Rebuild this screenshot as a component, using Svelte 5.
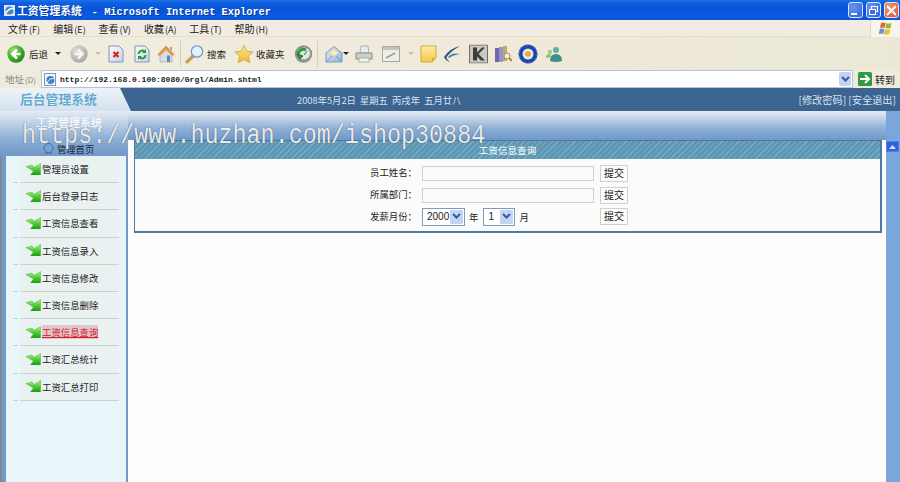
<script>
  const menus = [['文件','F'],['编辑','E'],['查看','V'],['收藏','A'],['工具','T'],['帮助','H']];
  const items = ['管理员设置','后台登录日志','工资信息查看','工资信息录入','工资信息修改','工资信息删除','工资信息查询','工资汇总统计','工资汇总打印'];
  const active = '工资信息查询';
</script>

<div class="win">
  <svg class="defs" width="0" height="0" aria-hidden="true">
    <defs>
      <radialGradient id="gGreen" cx=".35" cy=".3" r=".8"><stop offset="0" stop-color="#a5e27f"/><stop offset=".55" stop-color="#42ad2c"/><stop offset="1" stop-color="#1f7d1d"/></radialGradient>
      <radialGradient id="gGray" cx=".35" cy=".3" r=".8"><stop offset="0" stop-color="#dedcd4"/><stop offset="1" stop-color="#a5a49c"/></radialGradient>
      <linearGradient id="gPage" x1="0" y1="0" x2="1" y2="1"><stop offset="0" stop-color="#fafafa"/><stop offset="1" stop-color="#c5d4ee"/></linearGradient>
      <linearGradient id="gStar" x1="0" y1="0" x2="0" y2="1"><stop offset="0" stop-color="#fbeb90"/><stop offset="1" stop-color="#eeb92c"/></linearGradient>
      <linearGradient id="gNote" x1="0" y1="0" x2="0" y2="1"><stop offset="0" stop-color="#fdeea4"/><stop offset="1" stop-color="#f3c64a"/></linearGradient>
      <linearGradient id="gMail" x1="0" y1="0" x2="1" y2="1"><stop offset="0" stop-color="#e9f1fb"/><stop offset="1" stop-color="#8fb1dc"/></linearGradient>
      <linearGradient id="gArrow" x1="0" y1="0" x2="0" y2="1"><stop offset="0" stop-color="#b8f08e"/><stop offset=".5" stop-color="#4fcf34"/><stop offset="1" stop-color="#1f9a1c"/></linearGradient>
    </defs>
  </svg>

  <div class="titlebar">
    <svg class="appicon" width="13" height="13" viewBox="0 0 13 13"><rect x="1" y="1" width="11" height="11" fill="#dfe8f5"/><circle cx="6.5" cy="6.5" r="4" fill="#3f86c9"/><path d="M3 9q4-6 8-4" stroke="#fff" fill="none" stroke-width="1.5"/></svg>
    <span class="ttl">工资管理系统<span class="ttl-en">- Microsoft Internet Explorer</span></span>
    <div class="winbtns">
      <span class="wb"><i class="min"></i></span>
      <span class="wb"><svg width="11" height="11" viewBox="0 0 11 11" fill="none" stroke="#fff"><rect x="3.5" y="1.5" width="6" height="5"/><rect x="1.5" y="4.5" width="6" height="5" fill="#3a6ee0"/></svg></span>
      <span class="wb close"><svg width="11" height="11" viewBox="0 0 11 11" stroke="#fff" stroke-width="2"><path d="M1 1l9 9M10 1l-9 9"/></svg></span>
    </div>
  </div>

  <div class="menubar">
    {#each menus as m}<span class="mi">{m[0]}<small>({m[1]})</small></span>{/each}
    <span class="flagbox">
      <svg width="15" height="15" viewBox="0 0 15 15"><path d="M3 2q2-1 4.500 0L6.500 7q-2-1-4.500 0z" fill="#e8643c"/><path d="M8 2q2 1 5.500 0L12.500 7q-3 1-5-.2z" fill="#8cc03c"/><path d="M1.800 8q2-1 4.500 0l-1 5q-2-1-4.500 0z" fill="#5a94de"/><path d="M6.800 8q2 1 5.500 0l-1 5q-3 1-5.500 0z" fill="#f0c030"/></svg>
    </span>
  </div>

  <div class="toolbar">
    <svg class="ic" style="--l:7px" width="18" height="18" viewBox="0 0 18 18"><circle cx="9" cy="9" r="8.7" fill="url(#gGreen)"/><path d="M10 4.500L5.500 9l4.500 4.500M5.500 9h8" stroke="#fff" stroke-width="2.600" fill="none"/></svg>
    <span class="tx" style="--l:29px">后退</span>
    <i class="caret" style="--l:55px"></i>
    <svg class="ic" style="--l:70px" width="18" height="18" viewBox="0 0 18 18"><circle cx="9" cy="9" r="8.700" fill="url(#gGray)"/><path d="M8 4.500L12.500 9 8 13.500M12.500 9h-8" stroke="#f6f6f2" stroke-width="2.600" fill="none"/></svg>
    <i class="caret faint" style="--l:95px"></i>
    <svg class="ic" style="--l:108px" width="16" height="18" viewBox="0 0 16 18"><path d="M1 1h10l4 4v12H1z" fill="url(#gPage)" stroke="#8094b8"/><path d="M5.500 7l5 5M10.500 7l-5 5" stroke="#d9241c" stroke-width="2.200"/></svg>
    <svg class="ic" style="--l:134px" width="16" height="18" viewBox="0 0 16 18"><path d="M1 1h10l4 4v12H1z" fill="url(#gPage)" stroke="#8094b8"/><path d="M4.500 9a3.500 3.500 0 0 1 6-2.400M11.500 10a3.500 3.500 0 0 1-6 2.400" stroke="#2c9a34" stroke-width="1.900" fill="none"/><path d="M12 4v4H8zM4 15v-4h4z" fill="#2c9a34"/></svg>
    <svg class="ic" style="--l:157px" width="18" height="18" viewBox="0 0 18 18"><path d="M3 8l6-5 6 5v9H3z" fill="#d9dde0" stroke="#9aa0a8" stroke-width=".6"/><path d="M9 1L.8 9.500l2 1L9 4.500l6.200 6 2-1z" fill="#ec9a3e" stroke="#c77a24" stroke-width=".5"/><path d="M13 2h2v4l-2-2z" fill="#b0a090"/><rect x="10" y="10.500" width="3" height="6.500" fill="#5d87b8"/></svg>
    <i class="sep" style="--l:180px"></i>
    <svg class="ic" style="--l:185px" width="19" height="19" viewBox="0 0 19 19"><path d="M8 11.500l-6 6" stroke="#cf9a5c" stroke-width="3.200" stroke-linecap="round"/><circle cx="12" cy="7" r="5.700" fill="#e6f2fb" stroke="#6d9cc6" stroke-width="1.300"/></svg>
    <span class="tx" style="--l:207px">搜索</span>
    <svg class="ic" style="--l:234px" width="20" height="19" viewBox="0 0 20 19"><path d="M10 .8l2.800 6 6.400.7-4.800 4.300 1.400 6.400L10 15l-5.800 3.200 1.400-6.400L.8 7.500l6.400-.7z" fill="url(#gStar)" stroke="#c9a63a" stroke-width=".8"/></svg>
    <span class="tx" style="--l:256px">收藏夹</span>
    <svg class="ic" style="--l:294px" width="19" height="18" viewBox="0 0 19 18"><circle cx="9.500" cy="9" r="8.700" fill="#8a978f"/><circle cx="10" cy="8.500" r="6" fill="#dfe8e2"/><path d="M4 10a5.500 5.500 0 0 1 8-5" stroke="#2f9b3a" stroke-width="3" fill="none"/><path d="M3 9l3 5 3-3zM13 6l-3 4" fill="#2f9b3a" stroke="#2a6a3a"/></svg>
    <i class="sep" style="--l:317px"></i>
    <svg class="ic" style="--l:325px" width="18" height="18" viewBox="0 0 18 18"><path d="M1 8l8-6.500L17 8v9H1z" fill="url(#gMail)" stroke="#7a9cc8"/><path d="M4 8l5-4 5 4-5 3.500z" fill="#f5ecc8" stroke="#cdbb7a" stroke-width=".6"/><path d="M1 17l6-6M17 17l-6-6" stroke="#7a9cc8"/></svg>
    <i class="caret" style="--l:343px"></i>
    <svg class="ic" style="--l:355px" width="18" height="18" viewBox="0 0 18 18"><path d="M6 1h7l1 7H5z" fill="#e6ecf4" stroke="#9aa3ad" stroke-width=".8"/><path d="M1 8h16v6H1z" fill="#cfcfca" stroke="#8d8d87"/><path d="M4 13h10v4H4z" fill="#f4f4f4" stroke="#a0a09a" stroke-width=".8"/></svg>
    <svg class="ic" style="--l:382px" width="18" height="16" viewBox="0 0 18 16"><rect x=".5" y=".5" width="17" height="15" fill="#eeeee8" stroke="#a8a8a0"/><rect x="1" y="1" width="16" height="3" fill="#c4c4bd"/><path d="M4 12l9-5" stroke="#9c9c94" stroke-width="1.500"/></svg>
    <i class="caret faint" style="--l:408px"></i>
    <svg class="ic" style="--l:420px" width="17" height="18" viewBox="0 0 17 18"><path d="M1 1h15v12l-4 4H1z" fill="url(#gNote)" stroke="#d0aa3c"/><path d="M16 13h-4v4z" fill="#d8ac3c"/></svg>
    <svg class="ic" style="--l:443px" width="18" height="18" viewBox="0 0 18 18"><path d="M17 1Q7 3 1 12l2 1Q8 6 17 1z" fill="#2f5c86"/><path d="M17 9Q9 7 5 12l1 1q4-3 11-4z" fill="#4d7da3"/><path d="M1 12q2 4 6 5-3-2-4-5z" fill="#25496f"/></svg>
    <svg class="ic" style="--l:469px" width="19" height="19" viewBox="0 0 19 19"><rect x=".5" y=".5" width="18" height="18" fill="#c9c9c4" stroke="#6f6f68"/><path d="M4 3h4v5l5-5h3l-6.500 6.500L16 16h-4l-4-4v4H4z" fill="#3c3c3a"/></svg>
    <svg class="ic" style="--l:494px" width="18" height="18" viewBox="0 0 18 18"><rect x="1" y="3" width="4" height="14" fill="#6f68b0"/><rect x="5" y="2" width="4" height="15" fill="#9a92c8"/><rect x="9" y="1" width="4" height="15" fill="#b7ad6a"/><circle cx="13" cy="11" r="3" fill="#e9f0f4" stroke="#b8862c"/><path d="M15 13l3 3" stroke="#b8862c" stroke-width="2"/></svg>
    <svg class="ic" style="--l:518px" width="20" height="20" viewBox="0 0 20 20"><circle cx="10" cy="10" r="9.500" fill="#1f44a8"/><circle cx="10" cy="10" r="9" fill="none" stroke="#5f86d8" stroke-dasharray="2 2"/><circle cx="10" cy="10" r="5.500" fill="#dfe6f4"/><circle cx="10" cy="10" r="2.800" fill="#e9a92c"/></svg>
    <svg class="ic" style="--l:545px" width="18" height="18" viewBox="0 0 18 18"><circle cx="11" cy="5" r="3" fill="#5fb0a8"/><path d="M5 16q0-7 6-7t6 7q-6 2-12 0z" fill="#3f8f8a"/><circle cx="5" cy="7" r="2.200" fill="#9bcf88"/><path d="M1 13q0-4 4-4l1 3z" fill="#86bb76"/></svg>
  </div>

  <div class="addr">
    <span class="addr-label">地址<small>(D)</small></span>
    <div class="addr-box">
      <svg width="13" height="13" viewBox="0 0 13 13"><rect x=".5" y=".5" width="11" height="12" fill="#f3f6fb" stroke="#7d97bb"/><circle cx="6.500" cy="7" r="4" fill="#3b83c8"/><path d="M3 10q3-6 8-4" stroke="#fff" fill="none"/></svg>
      <span class="url">http://192.168.0.100:8080/Grgl/Admin.shtml</span>
      <span class="drop"><svg width="9" height="7" viewBox="0 0 9 7"><path d="M1 1l3.500 3.500L8 1" stroke="#3a5a98" stroke-width="2" fill="none"/></svg></span>
    </div>
    <span class="go"><svg width="14" height="14" viewBox="0 0 14 14"><rect width="14" height="14" rx="1.500" fill="#2f9a45"/><path d="M2 7h9M7 3l4 4-4 4" stroke="#fff" stroke-width="2" fill="none"/></svg>转到</span>
  </div>

  <header class="head">
    <div class="logo"><span>后台管理系统</span></div>
    <div class="date">2008年5月2日&nbsp; 星期五&nbsp; 丙戌年&nbsp; 五月廿八</div>
    <div class="links">[修改密码] [安全退出]</div>
  </header>

  <div class="content">
    <aside class="side">
      <div class="side-top">
        <div class="side-title">工资管理系统</div>
        <div class="side-home">
          <svg width="11" height="12" viewBox="0 0 11 12"><circle cx="5.500" cy="5" r="4.500" fill="#6fa4dc" stroke="#3f6fa8"/><path d="M2 10h7" stroke="#5a7a9e" stroke-width="2"/></svg>
          <span>管理首页</span>
        </div>
      </div>
      <nav class="side-list">
        {#each items as it}
          <div class="row" class:on={it === active}>
            <svg class="arrow" width="15" height="12" viewBox="0 0 15 12"><path d="M0 3.500L6 2l2 2.500L14.500.5V12H4.500L7.500 8z" fill="url(#gArrow)" stroke="#2aa524" stroke-width=".4"/></svg>
            <span class="lbl">{it}</span>
          </div>
        {/each}
      </nav>
    </aside>

    <main class="main">
      <section class="panel">
        <div class="panel-head">工资信息查询</div>
        <div class="form">
          <label class="fl">员工姓名：</label>
          <input class="inp" type="text" />
          <span class="btn">提交</span>

          <label class="fl">所属部门：</label>
          <input class="inp" type="text" />
          <span class="btn">提交</span>

          <label class="fl">发薪月份：</label>
          <div class="sels">
            <span class="sel y">2000<i><svg width="9" height="7" viewBox="0 0 9 7"><path d="M1 1l3.500 3.500L8 1" stroke="#3a5a98" stroke-width="2" fill="none"/></svg></i></span>
            <span class="unit">年</span>
            <span class="sel m">1<i><svg width="9" height="7" viewBox="0 0 9 7"><path d="M1 1l3.500 3.500L8 1" stroke="#3a5a98" stroke-width="2" fill="none"/></svg></i></span>
            <span class="unit">月</span>
          </div>
          <span class="btn">提交</span>
        </div>
      </section>
    </main>

    <div class="scroll"><span class="up"><svg width="7" height="4" viewBox="0 0 7 4"><path d="M0 4l3.500-4L7 4z" fill="#cfe0fa"/></svg></span></div>
  </div>

  <div class="wm">https://www.huzhan.com/ishop30884</div>
</div>

<style>
  :global(body) { margin: 0; background: #fff; }
  .defs { position: absolute; }
  .win {
    position: relative; width: 900px; height: 482px; overflow: hidden;
    display: flex; flex-direction: column;
    font-family: "Noto Sans CJK SC", "Liberation Sans", sans-serif;
    font-size: 10px; color: #222; background: #fdfdfd;
  }
  .titlebar {
    height: 20px; flex: none; display: flex; align-items: center; padding-left: 3px; box-sizing: border-box;
    background: linear-gradient(#1e73e8 0, #0f5fe0 3px, #0653d8 10px, #0a5ae4 16px, #0c54d0 20px);
    color: #fff;
  }
  .appicon { margin-right: 1px; }
  .ttl { font-size: 10.800px; font-weight: 700; white-space: nowrap; line-height: 20px; text-shadow: 1px 1px 0 #0a3a98; }
  .ttl-en { font: 700 10.300px "Liberation Mono", monospace; margin-left: 10px; }
  .winbtns { margin-left: auto; display: flex; gap: 3px; padding-right: 1px; }
  .wb {
    width: 15px; height: 16px; border-radius: 3px; border: 1px solid #dfe8fb; box-sizing: border-box;
    background: radial-gradient(circle at 30% 30%, #6a96f0, #2d5fe0);
    display: flex; align-items: center; justify-content: center; position: relative;
  }
  .wb .min { position: absolute; left: 2px; bottom: 2px; width: 6px; height: 2px; background: #fff; }
  .wb.close { background: radial-gradient(circle at 30% 30%, #ef9a78, #d9502c); }

  .menubar {
    height: 17px; flex: none; display: flex; align-items: center; padding-left: 8px; position: relative;
    background: #f1ebe1; border-bottom: 1px solid #e4e0d0; box-sizing: border-box; gap: 13.300px;
  }
  .mi { font-size: 10px; width: 32px; white-space: nowrap; color: #222; }
  .mi small { font-size: 9px; margin-left: 1px; }
  .flagbox {
    position: absolute; right: 0; top: 0; width: 30px; height: 17px; background: #f7f5ee; border-left: 1px solid #dedacb;
    display: flex; align-items: center; justify-content: center; box-sizing: border-box;
  }

  .toolbar {
    height: 33px; flex: none; position: relative;
    background: linear-gradient(90deg, #f0ede0, #efe9d9 60%, #ebe8d6);
  }
  .ic { position: absolute; left: var(--l); top: 50%; transform: translateY(-50%); }
  .tx { position: absolute; left: var(--l); top: 50%; transform: translateY(-50%); font-size: 9.500px; color: #222; white-space: nowrap; }
  .caret {
    position: absolute; left: var(--l); top: 15px; width: 0; height: 0;
    border: 3px solid transparent; border-top: 3px solid #222; border-bottom: 0;
  }
  .caret.faint { border-top-color: #c4c1b4; }
  .sep { position: absolute; left: var(--l); top: 4px; bottom: 3px; width: 1px; background: #d2cfbe; }

  .addr {
    height: 18px; flex: none; display: flex; align-items: center; background: #eeebdc; box-sizing: border-box;
  }
  .addr-label { width: 41px; padding-left: 5px; box-sizing: border-box; color: #85857c; font-size: 9.500px; white-space: nowrap; }
  .addr-label small { font-size: 8px; margin-left: 1px; }
  .addr-box {
    width: 812px; height: 18px; box-sizing: border-box; background: #fff; border: 1px solid #b5c2d8;
    display: flex; align-items: center; padding-left: 2px; gap: 3px;
  }
  .url { font: 700 8px "Liberation Mono", monospace; color: #222; }
  .drop {
    margin-left: auto; width: 12px; height: 14px; margin-right: 1px; background: #c3d3f3; border-radius: 2px;
    display: flex; align-items: center; justify-content: center;
  }
  .go { margin-left: 5px; display: flex; align-items: center; gap: 3px; font-size: 10px; color: #222; white-space: nowrap; }

  .head {
    height: 23px; flex: none; background: #3c6491; display: flex; align-items: center; position: relative; color: #d8e2ee;
  }
  .logo {
    width: 131px; height: 23px; flex: none; box-sizing: border-box; padding-left: 20px;
    background: linear-gradient(#eef3f8, #d3e2ef);
    clip-path: polygon(0 0, 120px 0, 131px 100%, 0 100%);
    font-size: 12.800px; line-height: 22px; color: #63a9d0; font-weight: 700; white-space: nowrap;
    text-shadow: 0 0 1px #fff;
  }
  .date { margin-left: 166px; font-size: 9.300px; white-space: nowrap; }
  .links { position: absolute; right: 4px; top: 0; line-height: 23px; font-size: 10.200px; white-space: nowrap; }

  .content { flex: 1; display: flex; min-height: 0; }
  .side { width: 128px; flex: none; display: flex; flex-direction: column; background: #7199c8; border-left: 2px solid #808a96; box-sizing: border-box; }
  .side-top { height: 45px; flex: none; background: linear-gradient(#e6ecf4, #8fb0d6 60%, #6f97c8); position: relative; margin-left: -2px; }
  .side-title { color: #fff; font-size: 11px; padding: 5px 0 0 36px; line-height: 13px; white-space: nowrap; }
  .side-home { display: flex; align-items: center; gap: 3px; padding: 14px 0 0 43px; color: #1c2a38; font-size: 9.300px; line-height: 12px; white-space: nowrap; }
  .side-list { flex: 1; margin: 0 2px 0 4px; background: #e8f6fa; padding: 0 7px; }
  .row {
    height: 27.200px; box-sizing: border-box; display: flex; align-items: center; gap: 1px;
    padding: 0 0 0 13px; position: relative;
    background: linear-gradient(90deg, transparent 8px, #e9f1f1 8px);
    border-bottom: 1px solid transparent;
    border-image: linear-gradient(90deg, #c6d3d0 6px, transparent 6px 8px, #c6d3d0 8px) 1;
  }
  .arrow { flex: none; margin-top: -1px; }
  .lbl { font-size: 9.400px; color: #222; white-space: nowrap; }
  .row.on .lbl { color: #d3202a; text-decoration: underline; background: #e2c6cc; }

  .main {
    flex: 1; min-width: 0; box-sizing: border-box; padding: 29px 4px 0 6px;
    background: linear-gradient(#e6ecf4, #8fb0d6 60%, #6f97c8) no-repeat 0 0 / 100% 29px, #fdfdfd;
  }
  .panel { height: 93px; border: 1px solid #4d7a9f; border-width: 1px 2px 2px 1px; box-sizing: border-box; background: #fbfbfb; }
  .panel-head {
    height: 18px; box-sizing: border-box; text-align: center; color: #fff; font-size: 9.600px; line-height: 18px;
    background: repeating-linear-gradient(135deg, #5c98b4 0 3px, #79acc3 3px 4px);
  }
  .form {
    display: grid; grid-template-columns: 43px 172px 28px; grid-auto-rows: 21.700px; column-gap: 6px; align-items: center;
    padding: 3.500px 0 0 235px;
  }
  .fl { font-size: 9.400px; white-space: nowrap; margin-right: -3px; color: #222; margin-top: -2px; }
  .form > :nth-child(3n + 2) { margin-left: 3px; width: 172px; }
  .inp { box-sizing: border-box; height: 15px; border: 1px solid #d0d0cc; background: #fbfbfb; padding: 0; }
  .btn {
    box-sizing: border-box; height: 17px; width: 28px; margin-left: 3px; border: 1px solid #d0d0cc; background: #fbfbfb;
    text-align: center; font-size: 10px; line-height: 13px; color: #222;
  }
  .sels { display: flex; align-items: center; }
  .sel {
    box-sizing: border-box; height: 18px; border: 1px solid #7f9db9; background: #fff; display: flex; align-items: center;
    padding-left: 4px; font: 10px "Liberation Sans", sans-serif; position: relative; flex: none;
  }
  .sel i {
    position: absolute; right: 1px; top: 1px; bottom: 1px; width: 13px; background: #c3d3f3; border-radius: 1px;
    display: flex; align-items: center; justify-content: center;
  }
  .sel.y { width: 43px; }
  .sel.m { width: 32px; }
  .unit { font-size: 9.400px; margin: 0 5px 0 4px; }
  .scroll { width: 14px; flex: none; background: #7ba6dc; padding-top: 30px; box-sizing: border-box; }
  .up { display: flex; width: 13px; height: 11px; align-items: center; justify-content: center; background: #2f62d8; border: 1px solid #4f80e8; box-sizing: border-box; }

  .wm {
    position: absolute; left: 22px; top: 123px; white-space: nowrap; pointer-events: none;
    font: 23.400px/30px "Liberation Mono", monospace; color: rgba(250, 250, 250, .92);
    text-shadow: 0 0 1px rgba(40, 50, 60, .8);
    transform: scaleY(1.15); transform-origin: 0 100%;
  }
</style>
